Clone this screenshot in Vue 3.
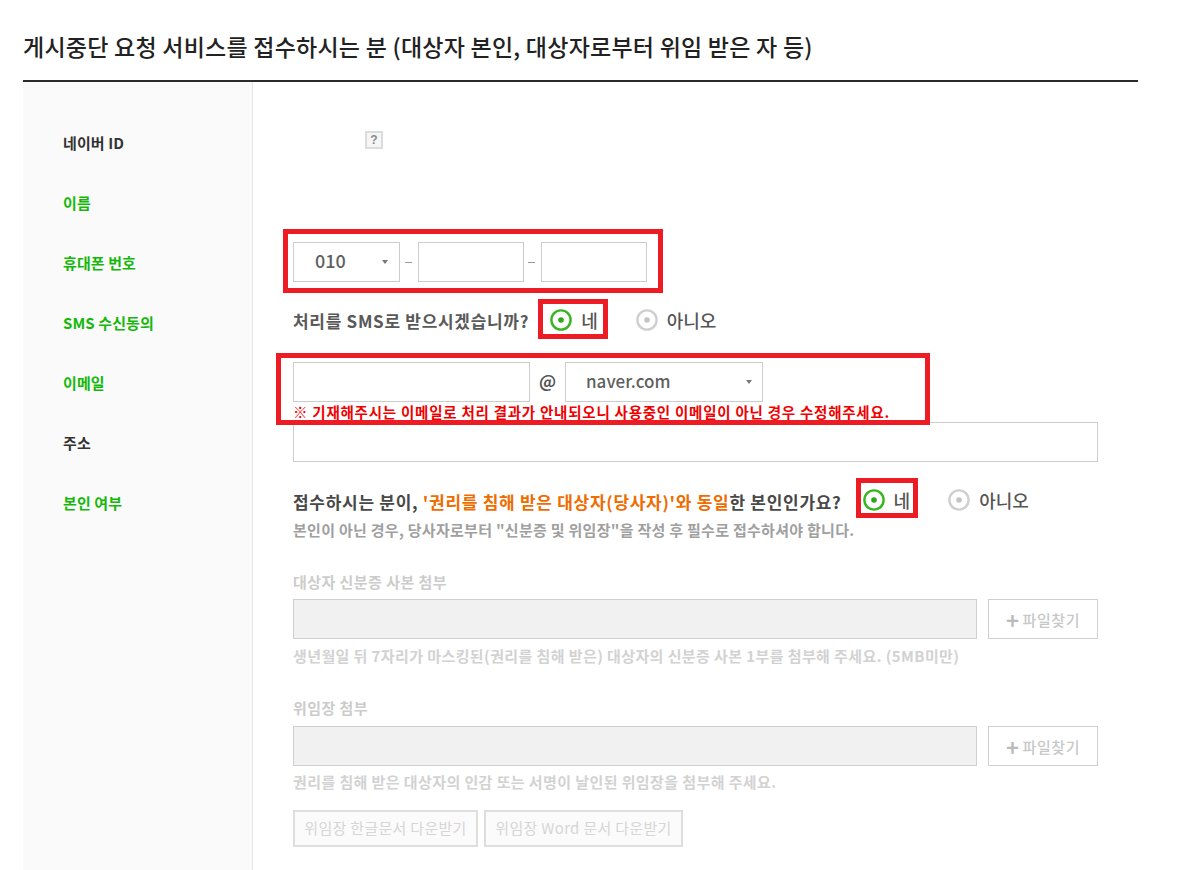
<script setup>
const labels = [
  { text: '네이버 ID', green: false },
  { text: '이름', green: true },
  { text: '휴대폰 번호', green: true },
  { text: 'SMS 수신동의', green: true },
  { text: '이메일', green: true },
  { text: '주소', green: false },
  { text: '본인 여부', green: true },
]
</script>

<template>
  <div class="page">
    <h2 class="title">게시중단 요청 서비스를 접수하시는 분 (대상자 본인, 대상자로부터 위임 받은 자 등)</h2>
    <div class="table">
      <aside class="side">
        <div v-for="l in labels" :key="l.text" class="label" :class="{ green: l.green }">{{ l.text }}</div>
      </aside>
      <main class="content">
        <div class="help-row"><span class="help">?</span></div>

        <div class="phone boxed">
          <div class="select sel-phone"><span>010</span><i class="caret"></i></div>
          <span class="dash"></span>
          <div class="input w106"></div>
          <span class="dash"></span>
          <div class="input w106"></div>
          <div class="red red-phone"></div>
        </div>

        <div class="radio-row sms boxed">
          <span class="q">처리를 SMS로 받으시겠습니까?</span>
          <span class="radio on">
            <svg width="22" height="22" viewBox="0 0 22 22"><circle cx="11" cy="11" r="9.6" fill="#fff" stroke="#35b61e" stroke-width="2.4"/><circle cx="11" cy="11" r="2.8" fill="#2aa815"/></svg>
            네
            <span class="red red-yes1"></span>
          </span>
          <span class="radio off">
            <svg width="22" height="22" viewBox="0 0 22 22"><circle cx="11" cy="11" r="9.6" fill="#fff" stroke="#cfcfcf" stroke-width="2.4"/><circle cx="11" cy="11" r="2.8" fill="#c4c4c4"/></svg>
            아니오
          </span>
        </div>

        <div class="email boxed">
          <div class="input w237"></div>
          <span class="at">@</span>
          <div class="select sel-mail"><span>naver.com</span><i class="caret"></i></div>
          <div class="red red-mail"></div>
        </div>
        <p class="warn">※ 기재해주시는 이메일로 처리 결과가 안내되오니 사용중인 이메일이 아닌 경우 수정해주세요.</p>

        <div class="input addr"></div>

        <div class="radio-row same boxed">
          <span class="q q2">접수하시는 분이, <b>'권리를 침해 받은 대상자(당사자)'와 동일</b>한 본인인가요?</span>
          <span class="radio on">
            <svg width="22" height="22" viewBox="0 0 22 22"><circle cx="11" cy="11" r="9.6" fill="#fff" stroke="#35b61e" stroke-width="2.4"/><circle cx="11" cy="11" r="2.8" fill="#2aa815"/></svg>
            네
            <span class="red red-yes2"></span>
          </span>
          <span class="radio off">
            <svg width="22" height="22" viewBox="0 0 22 22"><circle cx="11" cy="11" r="9.6" fill="#fff" stroke="#cfcfcf" stroke-width="2.4"/><circle cx="11" cy="11" r="2.8" fill="#c4c4c4"/></svg>
            아니오
          </span>
        </div>
        <p class="note">본인이 아닌 경우, 당사자로부터 "신분증 및 위임장"을 작성 후 필수로 접수하셔야 합니다.</p>

        <div class="sub first-sub">대상자 신분증 사본 첨부</div>
        <div class="file-row">
          <div class="file-input"></div>
          <div class="file-btn"><em>+</em>파일찾기</div>
        </div>
        <p class="hint">생년월일 뒤 7자리가 마스킹된(권리를 침해 받은) 대상자의 신분증 사본 1부를 첨부해 주세요. (5MB미만)</p>

        <div class="sub second-sub">위임장 첨부</div>
        <div class="file-row">
          <div class="file-input"></div>
          <div class="file-btn"><em>+</em>파일찾기</div>
        </div>
        <p class="hint hint2">권리를 침해 받은 대상자의 인감 또는 서명이 날인된 위임장을 첨부해 주세요.</p>

        <div class="downloads">
          <div class="dl w185">위임장 한글문서 다운받기</div>
          <div class="dl w199">위임장 Word 문서 다운받기</div>
        </div>
      </main>
    </div>
  </div>
</template>

<style>
html, body { background: #fff; overflow: hidden; }
</style>

<style scoped>
.page {
  width: 1115px;
  height: 870px;
  margin-left: 23px;
  overflow: hidden;
  font-family: "Noto Sans CJK KR", "Noto Sans", sans-serif;
}
.title {
  margin: 0;
  height: 82px;
  padding-top: 30px;
  box-sizing: border-box;
  font-size: 23px;
  letter-spacing: 0.24px;
  line-height: 32px;
  font-weight: 500;
  color: #222;
  border-bottom: 2px solid #2b2b2b;
  white-space: nowrap;
}
.table { display: flex; height: 788px; }
.side {
  width: 230px;
  box-sizing: border-box;
  background: #fafafa;
  border-right: 1px solid #e6e6e6;
  padding: 31px 0 0 40px;
}
.label {
  height: 60px;
  line-height: 60px;
  font-size: 15px;
  letter-spacing: 0.1px;
  font-weight: 700;
  color: #333;
}
.label.green { color: #14b80a; }
.content { flex: 1; padding-left: 40px; padding-right: 40px; position: relative; }
.boxed { position: relative; }
.help-row { height: 160px; padding-top: 49px; padding-left: 72px; box-sizing: border-box; }
.help {
  display: block;
  width: 18px;
  height: 18px;
  box-sizing: border-box;
  background: #f6f6f6;
  border: 2px solid #dcdcdc;
  color: #8a8a8a;
  font: 700 12px/14px "Liberation Sans", sans-serif;
  text-align: center;
}
.phone { display: flex; align-items: center; height: 40px; }
.input, .select { box-sizing: border-box; border: 1px solid #ccc; background: #fff; height: 40px; }
.w106 { width: 106px; }
.w237 { width: 237px; }
.select {
  display: flex;
  align-items: center;
  justify-content: space-between;
  font-size: 18px;
  font-weight: 500;
  color: #5f5f5f;
}
.select span { margin-top: -4px; }
.sel-phone { width: 107px; padding: 0 11px 0 21px; }
.sel-mail { width: 198px; padding: 0 10px 0 20px; font-size: 17px; }
.caret {
  width: 0;
  height: 0;
  border-left: 3.5px solid transparent;
  border-right: 3.5px solid transparent;
  border-top: 4px solid #777;
}
.dash { width: 7px; height: 1px; background: #999; margin: 0 6px 0 5px; }
.phone .input + .dash { margin: 0 6px 0 4px; }
.radio-row { display: flex; align-items: center; white-space: nowrap; }
.sms { height: 38px; margin-top: 19px; }
.q { font-size: 17px; letter-spacing: 0.7px; font-weight: 700; color: #595959; margin-right: 21px; }
.q2 { color: #484848; letter-spacing: 0.71px; }
.q2 b { color: #ef6c00; font-weight: 700; }
.radio {
  display: inline-flex;
  align-items: center;
  gap: 9px;
  height: 22px;
  font-size: 18px;
  font-weight: 500;
  color: #555;
  position: relative;
}
.radio.off { margin-left: 38px; }
.same .radio { margin-top: -2px; }
.email { display: flex; align-items: center; height: 40px; margin-top: 23px; }
.at { width: 35px; text-align: center; font-size: 17px; font-weight: 700; color: #555; margin-top: -4px; }
.warn {
  margin: 0;
  height: 20px;
  line-height: 20px;
  font-size: 14.5px;
  letter-spacing: 0.76px;
  font-weight: 700;
  color: #f00000;
  white-space: nowrap;
}
.addr { width: 805px; }
.same { height: 34px; margin-top: 22px; }
.note {
  margin: 0;
  font-size: 15px;
  letter-spacing: 0.28px;
  line-height: 24px;
  font-weight: 700;
  color: #a0a0a0;
  white-space: nowrap;
}
.sub { font-size: 15px; letter-spacing: 0.45px; font-weight: 700; color: #ccc; line-height: 20px; }
.first-sub { margin-top: 30px; height: 27px; }
.second-sub { margin-top: 31px; height: 28px; }
.file-row { display: flex; gap: 11px; }
.file-input {
  width: 684px;
  height: 40px;
  box-sizing: border-box;
  background: #f1f1f1;
  border: 1px solid #d0d0d0;
}
.file-btn {
  width: 110px;
  height: 40px;
  box-sizing: border-box;
  border: 1px solid #d0d0d0;
  background: #fff;
  display: flex;
  align-items: center;
  justify-content: center;
  font-size: 15px;
  letter-spacing: 0.6px;
  color: #c8c8c8;
  font-weight: 500;
}
.file-btn em { font-style: normal; font-size: 22px; font-weight: 700; line-height: 1; margin-right: 3px; color: #bbb; }
.hint {
  margin: 6px 0 0;
  height: 22px;
  font-size: 15px;
  letter-spacing: 0.4px;
  line-height: 22px;
  font-weight: 700;
  color: #d2d2d2;
  white-space: nowrap;
}
.hint2 { margin-top: 5px; }
.downloads { display: flex; gap: 6px; margin-top: 17px; }
.dl {
  height: 37px;
  box-sizing: border-box;
  border: 2px solid #dedede;
  background: #fbfbfb;
  line-height: 32px;
  text-align: center;
  font-size: 15px;
  letter-spacing: 0.3px;
  color: #d6d6d6;
  font-weight: 400;
  white-space: nowrap;
}
.w185 { width: 185px; }
.w199 { width: 199px; }
.red { position: absolute; border: 5px solid #ed1c24; box-sizing: border-box; pointer-events: none; }
.red-phone { left: -10px; top: -13px; width: 380px; height: 64px; }
.red-yes1 { left: -12px; top: -10px; width: 70px; height: 40px; }
.red-mail { left: -17px; top: -9px; width: 654px; height: 72px; }
.red-yes2 { left: -7px; top: -11px; width: 62px; height: 40px; }
</style>
